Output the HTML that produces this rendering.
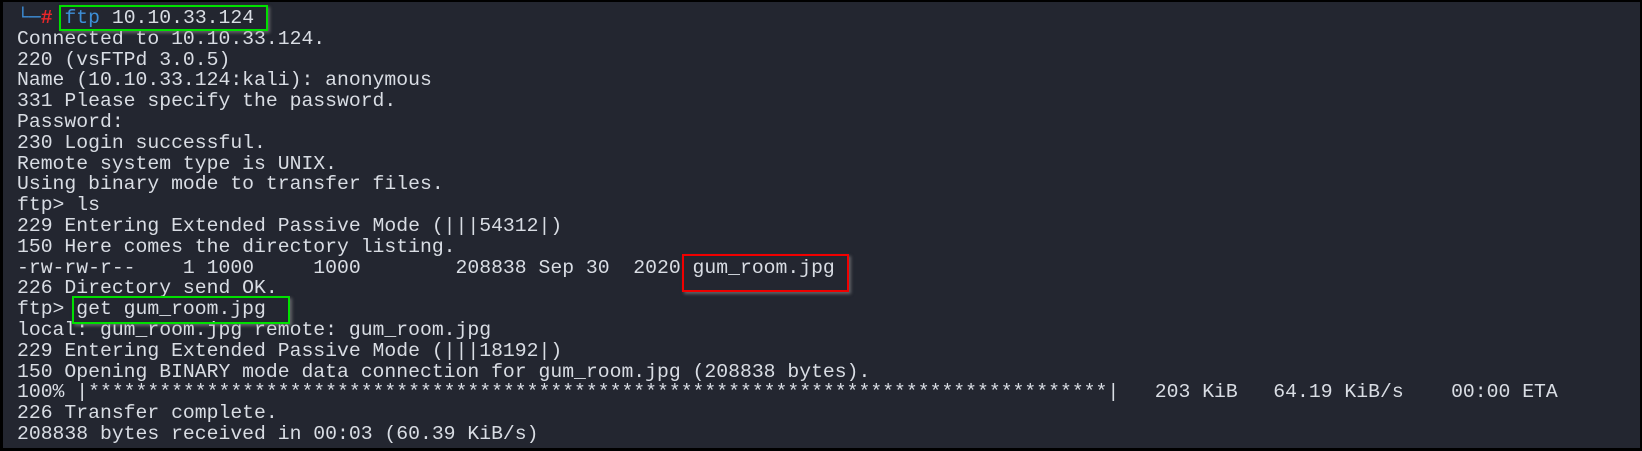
<!DOCTYPE html>
<html><head><style>
html,body{margin:0;padding:0;background:#000;}
#t{position:absolute;left:3px;top:2px;width:1637px;height:446px;background:#232630;overflow:hidden;}
pre{position:absolute;left:14px;top:6px;margin:0;font-family:"Liberation Mono",monospace;font-size:19.75px;line-height:20.8px;color:#d9dde4;letter-spacing:0;}
.b{color:#3d8fd8}.r{color:#e8262a;font-weight:bold}
.box{position:absolute;box-shadow:2px 2px 3px rgba(160,160,160,0.5);}
</style></head><body>
<div id="t">
<pre><span class="b">└─</span><span class="r">#</span> <span class="b">ftp</span> 10.10.33.124
Connected to 10.10.33.124.
220 (vsFTPd 3.0.5)
Name (10.10.33.124:kali): anonymous
331 Please specify the password.
Password:
230 Login successful.
Remote system type is UNIX.
Using binary mode to transfer files.
ftp&gt; ls
229 Entering Extended Passive Mode (|||54312|)
150 Here comes the directory listing.
-rw-rw-r--    1 1000     1000        208838 Sep 30  2020 gum_room.jpg
226 Directory send OK.
ftp&gt; get gum_room.jpg
local: gum_room.jpg remote: gum_room.jpg
229 Entering Extended Passive Mode (|||18192|)
150 Opening BINARY mode data connection for gum_room.jpg (208838 bytes).
100% |**************************************************************************************|   203 KiB   64.19 KiB/s    00:00 ETA
226 Transfer complete.
208838 bytes received in 00:03 (60.39 KiB/s)</pre>
</div>
<div class="box" style="left:59px;top:5px;width:205px;height:22px;border:2px solid #00e000;"></div>
<div class="box" style="left:682px;top:254px;width:163px;height:34px;border:2px solid #f00000;"></div>
<div class="box" style="left:72px;top:296px;width:214px;height:24px;border:2px solid #00e000;"></div>
</body></html>
